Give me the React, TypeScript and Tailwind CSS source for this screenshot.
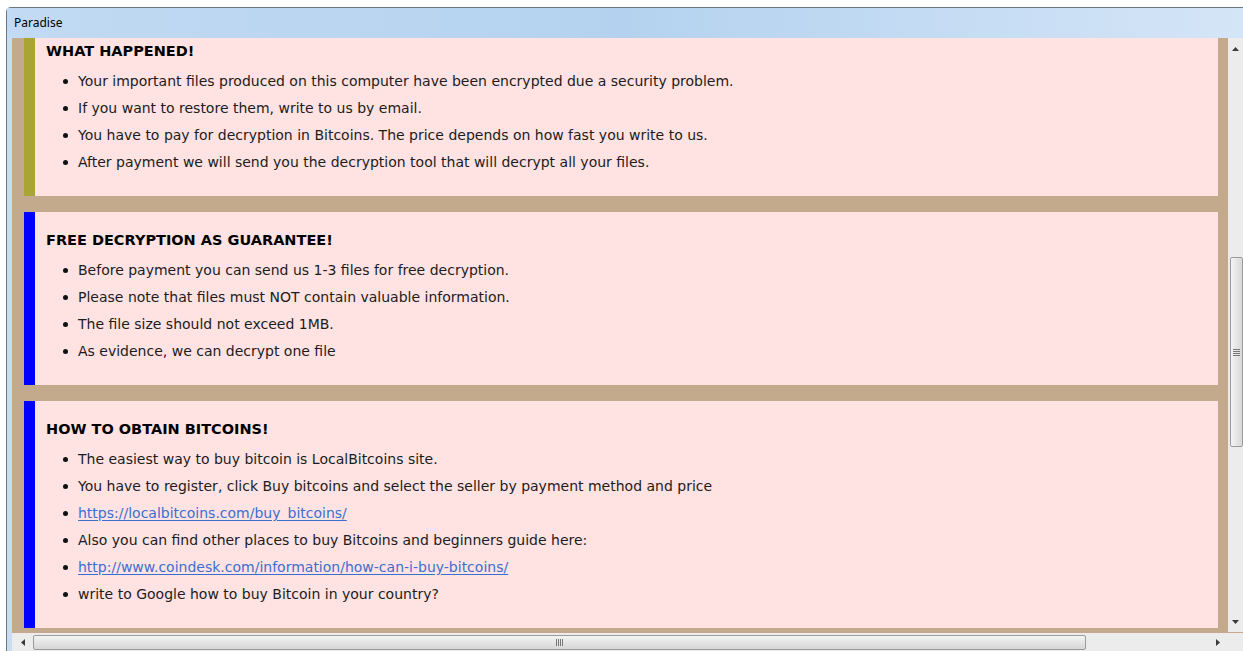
import React from 'react'

type Item = { text: string; href?: boolean }

const sections: { title: string; bar: string; items: Item[] }[] = [
  {
    title: 'WHAT HAPPENED!',
    bar: 'bg-[#a8a535]',
    items: [
      { text: 'Your important files produced on this computer have been encrypted due a security problem.' },
      { text: 'If you want to restore them, write to us by email.' },
      { text: 'You have to pay for decryption in Bitcoins. The price depends on how fast you write to us.' },
      { text: 'After payment we will send you the decryption tool that will decrypt all your files.' },
    ],
  },
  {
    title: 'FREE DECRYPTION AS GUARANTEE!',
    bar: 'bg-[#0000ff]',
    items: [
      { text: 'Before payment you can send us 1-3 files for free decryption.' },
      { text: 'Please note that files must NOT contain valuable information.' },
      { text: 'The file size should not exceed 1MB.' },
      { text: 'As evidence, we can decrypt one file' },
    ],
  },
  {
    title: 'HOW TO OBTAIN BITCOINS!',
    bar: 'bg-[#0000ff]',
    items: [
      { text: 'The easiest way to buy bitcoin is LocalBitcoins site.' },
      { text: 'You have to register, click Buy bitcoins and select the seller by payment method and price' },
      { text: 'https://localbitcoins.com/buy_bitcoins/', href: true },
      { text: 'Also you can find other places to buy Bitcoins and beginners guide here:' },
      { text: 'http://www.coindesk.com/information/how-can-i-buy-bitcoins/', href: true },
      { text: 'write to Google how to buy Bitcoin in your country?' },
    ],
  },
]

function Arrow({ dir }: { dir: 'up' | 'down' | 'left' | 'right' }) {
  const pts = {
    up: '0,4 7,4 3.5,0',
    down: '0,0 7,0 3.5,4',
    left: '4,0 4,7 0,3.5',
    right: '0,0 0,7 4,3.5',
  }[dir]
  const vert = dir === 'up' || dir === 'down'
  return (
    <svg width={vert ? 7 : 4} height={vert ? 4 : 7} viewBox={vert ? '0 0 7 4' : '0 0 4 7'}>
      <polygon points={pts} fill="#3c3c3c" />
    </svg>
  )
}

function Section({ title, bar, items }: { title: string; bar: string; items: Item[] }) {
  return (
    <div className="flex">
      <div className={`w-[11px] shrink-0 ${bar}`} />
      <div className="flex-1 bg-[#ffe2e2] pl-[11px] pt-[18px] pb-[20px]">
        <h2 className="h-[20px] text-[14.5px] leading-[20px] font-bold text-black mb-[7px]">{title}</h2>
        <ul>
          {items.map((it) => (
            <li key={it.text} className="flex h-[27px] items-center text-[14px] text-[#1c1c1c]">
              <span className="ml-[17px] mr-[10px] h-[5px] w-[5px] shrink-0 rounded-full bg-[#111]" />
              {it.href ? (
                <a href="#" className="text-[#3b6fcf] underline underline-offset-2">
                  {it.text}
                </a>
              ) : (
                <span>{it.text}</span>
              )}
            </li>
          ))}
        </ul>
      </div>
    </div>
  )
}

export default function App() {
  return (
    <div
      className="h-[651px] w-[1243px] overflow-hidden bg-white pt-[7px] pl-[6px]"
      style={{ fontFamily: '"DejaVu Sans", Verdana, sans-serif' }}
    >
      <div className="h-full rounded-tl-[5px] border-t border-l border-[#6d7680] bg-[#c8dcf2]">
        {/* title bar */}
        <div className="flex h-[30px] items-center bg-gradient-to-r from-[#c2daf3] via-[#b4d2ef] to-[#d4e5f7] pl-[7px]">
          <span className="text-[12px] text-black" style={{ fontFamily: '"Noto Sans", sans-serif' }}>
            Paradise
          </span>
        </div>

        <div className="flex h-[613px] pl-[5px]">
          <div className="flex flex-1 flex-col">
            <div className="flex h-[594px]">
              {/* page content */}
              <div className="flex-1 overflow-hidden bg-[#c3aa8c] pl-[12px] pr-[10px]">
                <div className="-mt-[15px] flex flex-col gap-[16px]">
                  {sections.map((s) => (
                    <Section key={s.title} {...s} />
                  ))}
                </div>
              </div>

              {/* vertical scrollbar */}
              <div className="flex w-[15px] flex-col items-center bg-[#ececec]">
                <div className="flex h-[19px] items-center pt-[2px]">
                  <Arrow dir="up" />
                </div>
                <div className="mt-[200px] flex h-[190px] w-[13px] ml-[2px] items-center justify-center rounded-[2px] border border-[#9b9b9b] bg-gradient-to-r from-[#f4f4f4] to-[#d8d8d8]">
                  <div className="flex flex-col gap-[1px]">
                    <div className="h-px w-[7px] bg-[#777]" />
                    <div className="h-px w-[7px] bg-[#777]" />
                    <div className="h-px w-[7px] bg-[#777]" />
                    <div className="h-px w-[7px] bg-[#777]" />
                  </div>
                </div>
                <div className="flex-1" />
                <div className="flex h-[19px] items-center pb-[2px]">
                  <Arrow dir="down" />
                </div>
              </div>
            </div>

            {/* horizontal scrollbar */}
            <div className="flex h-[19px] border-t border-[#c3aa8c]">
              <div className="flex flex-1 items-center bg-[#ececec]">
                <div className="flex w-[21px] justify-center">
                  <Arrow dir="left" />
                </div>
                <div className="flex h-[15px] w-[1053px] items-center justify-center rounded-[2px] border border-[#9b9b9b] bg-gradient-to-b from-[#f4f4f4] to-[#d6d6d6]">
                  <div className="flex gap-[1px]">
                    <div className="h-[7px] w-px bg-[#777]" />
                    <div className="h-[7px] w-px bg-[#777]" />
                    <div className="h-[7px] w-px bg-[#777]" />
                    <div className="h-[7px] w-px bg-[#777]" />
                  </div>
                </div>
                <div className="flex-1" />
                <div className="flex w-[20px] justify-center">
                  <Arrow dir="right" />
                </div>
              </div>
              <div className="w-[15px] bg-[#ececec]" />
            </div>
          </div>
        </div>
      </div>
    </div>
  )
}
